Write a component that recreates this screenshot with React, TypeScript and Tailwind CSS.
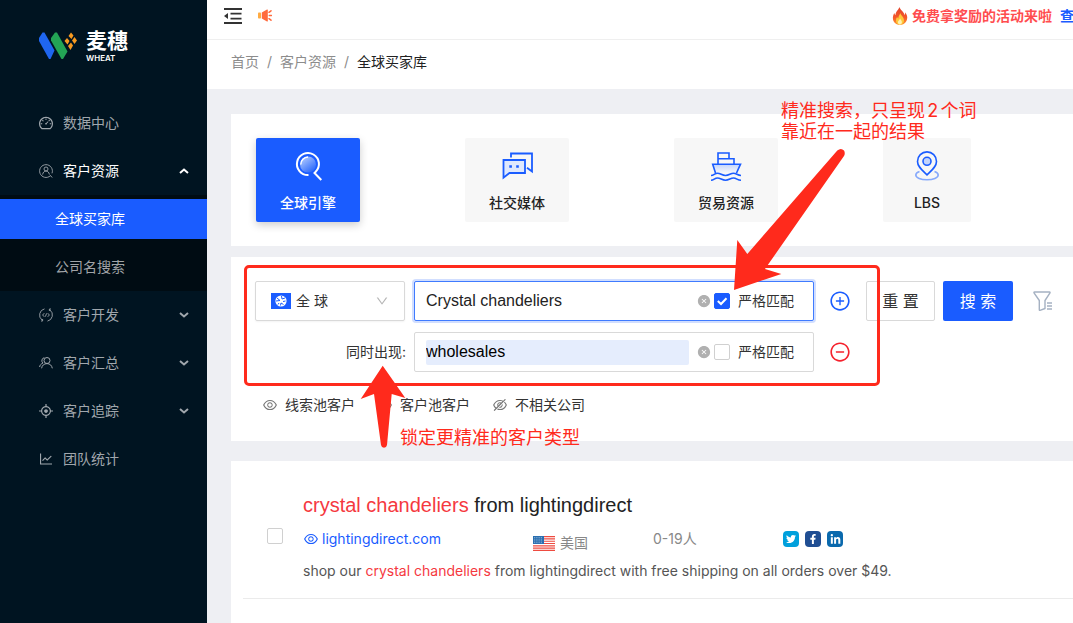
import React, { useState } from "react";
import {
  AiFillCloseCircle,
  AiOutlineAim,
  AiOutlineDashboard,
  AiOutlineDown,
  AiOutlineEye,
  AiOutlineEyeInvisible,
  AiOutlineLineChart,
  AiOutlineMinusCircle,
  AiOutlinePlusCircle,
} from "react-icons/ai";
import { FaFacebookF, FaLinkedinIn, FaTwitter } from "react-icons/fa";

function LogoMark() {
  return (
    <svg className="h-7 w-[38px]" viewBox="0 0 38 28" aria-hidden="true">
      <path d="M0 6 3.500 0.500H5.500L15.500 18.500 11.500 27H10L0 9Z" fill="#1f66f0" />
      <path d="M12 6 16 0.500H18L28.500 19.500 24 27H22.500L12 8.500Z" fill="#23a455" />
      <g fill="#f79a20">
        <path d="M32 0.500 34.500 3.500 32.500 7 29.500 4Z" />
        <path d="M28 6 30.500 9 28.500 12.500 25.500 9Z" />
        <path d="M35.500 5 38 8.500 35.500 12 33 8.500Z" />
        <path d="M32 10.500 34 13.500 31.500 18 29 14Z" />
      </g>
    </svg>
  );
}

function FoldIcon() {
  return (
    <svg className="h-4 w-[18px]" viewBox="0 0 18 16" aria-hidden="true">
      <path d="M0 0h18v2H0ZM6.500 4.800H17.500v1.700H6.500ZM6.500 9.700H17.500v1.700H6.500ZM0 14h18v2H0ZM0 8 4 5v6Z" fill="#333" />
    </svg>
  );
}

function UserSearchIcon() {
  return (
    <svg className="size-[14px]" viewBox="0 0 14 14" fill="none" stroke="currentColor" strokeWidth="0.9" aria-hidden="true">
      <path d="M11.300 11.800A6.400 6.400 0 1 1 13 9.300M11 11.300l2.400 2.200" />
      <circle cx="7" cy="5" r="2" />
      <path d="M3.600 10.500C4 8.300 5.300 7 7 7s3 1.300 3.400 3.500" />
    </svg>
  );
}

function DevelopIcon() {
  return (
    <svg className="size-[14px]" viewBox="0 0 14 14" fill="none" stroke="currentColor" strokeWidth="0.9" aria-hidden="true">
      <path d="M5.500 0.900A6.300 6.300 0 0 0 3 12M2 13h1.600v-2M8.500 13.100A6.300 6.300 0 0 0 11 2M12 1h-1.600v2" />
      <path d="M5.300 5.200 3.600 7l1.700 1.800M8.700 5.200 10.400 7 8.700 8.800M7.600 5.400 6.400 8.600" />
    </svg>
  );
}

function TeamIcon() {
  return (
    <svg className="size-[14px]" viewBox="0 0 14 14" fill="none" stroke="currentColor" strokeWidth="1" aria-hidden="true">
      <circle cx="8" cy="4.500" r="3" />
      <path d="M2.600 12.300C3 9.500 5 7.600 8 7.600s4.800 1.900 5.300 4.700M5.300 1.700A3 3 0 0 0 4 7C2 7.800.800 9.300.600 11" />
    </svg>
  );
}

function SoundIcon() {
  return (
    <svg className="h-[13px] w-[14px]" viewBox="0 0 14 13" aria-hidden="true">
      <rect x="0" y="3.500" width="3" height="6" rx="0.800" fill="#ffab42" />
      <path d="M3.800 3.500 9 0.500q.8-.3.800.500v11q0 .8-.8.500L3.800 9.500Z" fill="#ff6a3d" />
      <path d="M11 3.300 13 1.800M11.300 6.500h2.200M11 9.700l2 1.500" stroke="#ff6a3d" strokeWidth="1.500" strokeLinecap="round" />
    </svg>
  );
}

function FireIcon() {
  return (
    <svg className="h-[18px] w-[16px]" viewBox="0 0 16 18" aria-hidden="true">
      <defs>
        <linearGradient id="flame" x1="0" y1="0" x2="0" y2="1">
          <stop offset="0" stopColor="#e2432c" />
          <stop offset="0.600" stopColor="#f4592a" />
          <stop offset="1" stopColor="#ff9b2e" />
        </linearGradient>
      </defs>
      <path d="M7.500 0c.5 3 4.500 4.500 5 8 .7-.7.700-1.800.500-2.800C15 7.500 15.700 9.500 15 12.500c-.7 3-3.300 5.300-7 5.300S1.500 15.500 1 12.500C.500 9.500 1.500 7.500 2.300 6c.2 1 .5 1.700 1.200 2.200C3.600 4.500 6.500 3 7.500 0Z" fill="url(#flame)" />
      <path d="M8.300 6c.2 2.300 3.500 3.500 3.700 7.200.1 2.500-1.700 4.200-4 4.200s-4-1.600-4-4c0-1.500.6-2.600 1.300-3.300.1.900.5 1.300 1 1.500C6.300 9.500 7.500 8 8.300 6Z" fill="#ffc93a" />
      <path d="M8.200 11.500c.3 1.300 1.700 2 1.700 3.700 0 1.300-.8 2.200-2 2.200s-2-.9-2-2.200c0-1.500 1.700-2 2.300-3.700Z" fill="#fff2b0" />
    </svg>
  );
}

function EngineIcon() {
  return (
    <svg className="size-8" viewBox="0 0 32 32" fill="none" aria-hidden="true">
      <defs>
        <linearGradient id="lens" x1="0.200" y1="0.100" x2="0.800" y2="0.900">
          <stop offset="0" stopColor="#a9c4ff" />
          <stop offset="1" stopColor="#2e6bfb" />
        </linearGradient>
      </defs>
      <circle cx="16" cy="14.500" r="8" fill="url(#lens)" />
      <path d="M8.800 14.500A7.500 7.500 0 0 1 16 7" stroke="#fff" strokeWidth="1.400" />
      <path d="M16.500 25A11 11 0 1 1 23.500 22l-1 1 6.800 7" stroke="#fff" strokeWidth="2" />
    </svg>
  );
}

function ChatIcon() {
  return (
    <svg className="size-8" viewBox="0 0 32 32" fill="none" stroke="#1a5cff" strokeWidth="1.800" aria-hidden="true">
      <path d="M10 7.500v-4h21V21.500L26 17.700" />
      <path d="M2.500 10H24v13H8.500l-6 4.700Z" fill="#dfe8fd" />
      <path d="M8.300 16.500h2.600M15.200 16.500h2.600" strokeWidth="2.600" />
    </svg>
  );
}

function ShipIcon() {
  return (
    <svg className="size-8" viewBox="0 0 32 32" fill="none" stroke="#1a5cff" strokeWidth="1.600" aria-hidden="true">
      <defs>
        <linearGradient id="hull" x1="0" y1="0" x2="0" y2="1">
          <stop offset="0" stopColor="#c3d4fb" />
          <stop offset="1" stopColor="#f7f8fa" />
        </linearGradient>
      </defs>
      <path d="M5.500 23 2.700 14.200H30.500L26.500 23" fill="url(#hull)" />
      <path d="M8 14V3h11v5.700M8 8.800h16V14" />
      <path d="M1 25.500c3 0 3.500-2.300 6.500-2.300s4.500 2.300 8 2.300 5-2.300 8-2.300 4 2.300 7.500 2.300M1 30.300c3 0 3.500-2.300 6.500-2.300s4.500 2.300 8 2.300 5-2.300 8-2.300 4 2.300 7.500 2.300" />
    </svg>
  );
}

function PinIcon() {
  return (
    <svg className="size-8" viewBox="0 0 32 32" fill="none" stroke="#1a5cff" strokeWidth="1.600" aria-hidden="true">
      <path d="M8.500 21.500C6 22.300 4.800 23.500 4.800 25c0 2.800 5 4.800 11.200 4.800s11.200-2 11.200-4.800c0-1.500-1.200-2.700-3.700-3.500" stroke="#86a9fb" />
      <path d="M16 24.800C11 20 6.500 16.500 6.500 11.400a9.500 9.500 0 0 1 19 0C25.500 16.500 21 20 16 24.800Z" fill="#f7f7f7" />
      <circle cx="16" cy="11.300" r="4" fill="#c3d4fb" />
    </svg>
  );
}

function GlobeFlag() {
  return (
    <svg className="h-4 w-5" viewBox="0 0 20 16" aria-hidden="true">
      <rect width="20" height="16" fill="#1a5cff" />
      <circle cx="10" cy="8" r="5.600" fill="#fff" />
      <path d="M6 5 9 7.500 5 8M10.500 3 11 6l3-1M12 8.500l2.500-.5M9.500 12.500l.5-2.500 2.500 1.500M7 11.500 8 10" stroke="#1a5cff" strokeWidth="1" fill="none" />
    </svg>
  );
}

function UsFlag() {
  return (
    <svg className="h-[15px] w-[22px]" viewBox="0 0 22 15" aria-hidden="true">
      <rect width="22" height="15" fill="#fff" />
      <path d="M0 .6h22M0 2.900h22M0 5.200h22M0 7.500h22M0 9.800h22M0 12.100h22M0 14.400h22" stroke="#ee4b40" strokeWidth="1.150" />
      <rect width="11" height="8" fill="#2a6fb0" />
      <path d="M1 1.500h9M1 3.200h9M1 4.900h9M1 6.600h9" stroke="#b9d3ea" strokeWidth="0.700" strokeDasharray="0.800 1" />
    </svg>
  );
}

function FilterIcon() {
  return (
    <svg className="size-5" viewBox="0 0 20 20" fill="none" stroke="#a5b1c2" strokeWidth="1.400" aria-hidden="true">
      <path d="M12 9.500 17 1.800Q17.200 1 16.500 1H1.500Q.8 1 1 1.800L6.300 9.500V18.500Q6.300 19.500 7 19.300L12 17.500Z" strokeLinejoin="round" />
      <path d="M14 12h5M14 15h5M14 18h5" />
    </svg>
  );
}

function Tick({ id, label, checked, onChange }: { id: string; label?: string; checked: boolean; onChange: () => void }) {
  return (
    <span className="relative flex size-4 shrink-0">
      <input
        id={id}
        type="checkbox"
        aria-label={label}
        checked={checked}
        onChange={onChange}
        className="size-4 appearance-none rounded-xs border border-[#d0d0d0] bg-white checked:border-[#1a5cff] checked:bg-[#1a5cff]"
      />
      {checked && (
        <svg className="pointer-events-none absolute inset-0 size-4" viewBox="0 0 16 16" fill="none" stroke="#fff" strokeWidth="2" aria-hidden="true">
          <path d="M3.800 8 7 11l5.500-5.800" />
        </svg>
      )}
    </span>
  );
}

function MenuItem({ icon, label, open, arrow }: { icon: React.ReactNode; label: string; open?: boolean; arrow?: boolean }) {
  return (
    <button
      type="button"
      className={`flex h-12 w-full items-center gap-[9px] pr-[18px] pl-[38px] text-left ${open ? "text-white" : "text-[#a0a7ad]"}`}
    >
      <span className="flex w-4 justify-center text-[16px] text-[#a0a7ad]">{icon}</span>
      <span className="flex-1">{label}</span>
      {arrow && (
        <svg className={`size-[10px] ${open ? "rotate-180" : ""}`} viewBox="0 0 10 10" fill="none" stroke="currentColor" strokeWidth="2" aria-hidden="true">
          <path d="M1 3l4 3.500L9 3" />
        </svg>
      )}
    </button>
  );
}

function Sidebar() {
  return (
    <aside className="w-[207px] shrink-0 bg-[#001421] pt-[29px]">
      <div className="mb-9 flex h-[34px] items-center gap-[9px] pl-[39px] text-white">
        <LogoMark />
        <div className="flex flex-col pt-px">
          <span className="text-[21px] leading-[22px] font-bold">麦穗</span>
          <span className="text-[8px] leading-[12px] font-semibold">WHEAT</span>
        </div>
      </div>
      <nav>
        <MenuItem icon={<AiOutlineDashboard />} label="数据中心" />
        <MenuItem icon={<UserSearchIcon />} label="客户资源" open arrow />
        <div className="flex flex-col gap-2 bg-[#000c13] py-1">
          <a href="#buyers" className="flex h-10 items-center bg-[#1a5cff] pl-[55px] text-white">
            全球买家库
          </a>
          <a href="#company" className="flex h-10 items-center pl-[55px] text-[#a0a4a7]">
            公司名搜索
          </a>
        </div>
        <MenuItem icon={<DevelopIcon />} label="客户开发" arrow />
        <MenuItem icon={<TeamIcon />} label="客户汇总" arrow />
        <MenuItem icon={<AiOutlineAim />} label="客户追踪" arrow />
        <MenuItem icon={<AiOutlineLineChart />} label="团队统计" />
      </nav>
    </aside>
  );
}

function SourceTab({ icon, label, active, narrow }: { icon: React.ReactNode; label: string; active?: boolean; narrow?: boolean }) {
  return (
    <button
      type="button"
      className={`flex h-[84px] shrink-0 flex-col items-center gap-[10px] rounded-xs pt-3 font-medium ${narrow ? "w-[88px]" : "w-[104px]"} ${
        active ? "bg-[#1a5cff] text-white shadow-[0_3px_8px_rgba(0,0,0,0.2)]" : "bg-[#f7f7f7] text-[#222]"
      }`}
    >
      {icon}
      {label}
    </button>
  );
}

function KeywordBox({ id, label, initial, focused, strict }: { id: string; label: string; initial: string; focused?: boolean; strict: boolean }) {
  const [value, setValue] = useState(initial);
  const [checked, setChecked] = useState(strict);
  return (
    <div
      className={`flex h-10 w-[400px] shrink-0 items-center rounded-xs border bg-white pr-[19px] pl-[11px] ${
        focused ? "border-[#3f7bff] shadow-[0_0_0_2px_rgba(26,92,255,0.2)]" : "border-[#d9d9d9]"
      }`}
    >
      <input
        type="text"
        aria-label={label}
        value={value}
        onChange={(e) => setValue(e.target.value)}
        className={`mr-2 h-[25px] min-w-0 flex-1 rounded-xs font-['Liberation_Sans','Noto_Sans_CJK_SC',sans-serif] text-[16px] outline-none ${
          focused ? "text-[#222]" : "bg-[#e5edfd] text-black"
        }`}
      />
      <button type="button" aria-label="清除" onClick={() => setValue("")} className="mr-[3px] text-[#b0b0b0]">
        <AiFillCloseCircle className="size-[14px]" />
      </button>
      <Tick id={id + "-strict"} checked={checked} onChange={() => setChecked(!checked)} />
      <label htmlFor={id + "-strict"} className="pl-2 text-[#333]">
        严格匹配
      </label>
    </div>
  );
}

function SearchPanel() {
  return (
    <section className="mt-[11px] h-[184px] overflow-hidden bg-white pt-6 pl-6">
      <div className="flex items-center">
        <button type="button" className="flex h-10 w-[150px] shrink-0 items-center rounded-xs border border-[#d9d9d9] px-[15px] text-[#333] shadow-xs">
          <GlobeFlag />
          <span className="flex-1 pl-[5px] text-left">全 球</span>
          <AiOutlineDown className="size-[14px] text-[#b5b5b5]" />
        </button>
        <div className="ml-[9px] flex">
          <KeywordBox id="keyword" label="关键词" initial="Crystal chandeliers" focused strict />
        </div>
        <button type="button" aria-label="添加" className="mx-[15px] text-[#1a5cff]">
          <AiOutlinePlusCircle className="size-[22px]" />
        </button>
        <button type="button" className="h-10 w-[69px] shrink-0 rounded-xs border border-[#d9d9d9] text-[16px] text-[#333]">
          重 置
        </button>
        <button type="button" className="ml-2 h-10 w-[70px] shrink-0 rounded-xs bg-[#1a5cff] text-[16px] text-white">
          搜 索
        </button>
        <button type="button" aria-label="筛选" className="ml-5 shrink-0">
          <FilterIcon />
        </button>
      </div>
      <div className="mt-[11px] flex items-center">
        <span className="w-[151px] shrink-0 text-right text-[#333]">同时出现:</span>
        <div className="ml-2 flex">
          <KeywordBox id="together" label="同时出现" initial="wholesales" strict={false} />
        </div>
        <button type="button" aria-label="移除" className="mx-[15px] text-[#f5222d]">
          <AiOutlineMinusCircle className="size-[22px]" />
        </button>
      </div>
      <div className="mt-[22px] flex gap-[22px] pl-[7px] text-[#333]">
        <button type="button" className="flex items-center gap-[7px]">
          <AiOutlineEye className="size-4 text-[#777]" />
          线索池客户
        </button>
        <button type="button" className="flex items-center gap-[7px]">
          <AiOutlineEye className="size-4 text-[#777]" />
          客户池客户
        </button>
        <button type="button" className="flex items-center gap-[7px]">
          <AiOutlineEyeInvisible className="size-4 text-[#777]" />
          不相关公司
        </button>
      </div>
    </section>
  );
}

function ResultPanel() {
  const [picked, setPicked] = useState(false);
  return (
    <section className="mt-5 flex-1 bg-white pl-3">
      <article className="flex items-center gap-5 border-b border-[#ebebeb] pt-7 pb-4 pl-6">
        <Tick id="result" label="选择" checked={picked} onChange={() => setPicked(!picked)} />
        <div className="flex flex-col">
          <h2 className="font-['Liberation_Sans','Noto_Sans_CJK_SC',sans-serif] text-[20px] leading-8 text-[#222]">
            <span className="text-[#f5393f]">crystal chandeliers</span> from lightingdirect
          </h2>
          <div className="mt-[7px] flex h-[22px] items-center text-[#888]">
            <a href="#site" className="flex w-[230px] items-center gap-[3px] text-[#1a5cff]">
              <AiOutlineEye className="size-4" />
              lightingdirect.com
            </a>
            <span className="flex w-[120px] items-center gap-[5px] pt-2">
              <UsFlag />
              美国
            </span>
            <span className="w-[130px]">0-19人</span>
            <span className="flex gap-[6px] text-white">
              <a href="#twitter" aria-label="Twitter" className="flex size-4 items-center justify-center rounded-[4px] bg-[#00a0dc]">
                <FaTwitter className="size-[10px]" />
              </a>
              <a href="#facebook" aria-label="Facebook" className="flex size-4 items-center justify-center rounded-[4px] bg-[#204e93]">
                <FaFacebookF className="size-[10px]" />
              </a>
              <a href="#linkedin" aria-label="LinkedIn" className="flex size-4 items-center justify-center rounded-[4px] bg-[#0a69ad]">
                <FaLinkedinIn className="size-[11px]" />
              </a>
            </span>
          </div>
          <p className="mt-[10px] text-[#555]">
            shop our <span className="text-[#f5393f]">crystal chandeliers</span> from lightingdirect with free shipping on all orders over $49.
          </p>
        </div>
      </article>
    </section>
  );
}

function Annotations() {
  return (
    <div className="pointer-events-none absolute inset-0 text-[18px] leading-[21px] text-[#ff2a1c]">
      <div className="absolute top-[265px] left-[37px] h-[121px] w-[636px] rounded-[5px] border-3 border-[#ff2a1c]" />
      <svg className="absolute top-[140px] left-[517px] h-[160px] w-[130px]" viewBox="724 140 130 160" fill="#ff2a1c" aria-hidden="true">
        <path d="M734 290 737.300 240 747.300 254 837.300 150.500Q841 147.500 844 150.500 845.500 153 844 156L765 269 781.300 274Z" />
      </svg>
      <svg className="absolute top-[360px] left-[148px] h-[90px] w-[56px]" viewBox="355 360 56 90" fill="#ff2a1c" aria-hidden="true">
        <path d="M382.700 365.700 405.300 398 391.700 394 387 445Q386.500 447.700 384 447.700T381 445L374 394 360.700 399Z" />
      </svg>
      <p className="absolute top-[100px] left-[574px] whitespace-nowrap [text-autospace:normal]">
        精准搜索，只呈现2个词
        <br />
        靠近在一起的结果
      </p>
      <p className="absolute top-[427px] left-[193px] whitespace-nowrap">锁定更精准的客户类型</p>
    </div>
  );
}

export default function App() {
  return (
    <div className="flex min-h-screen overflow-hidden bg-[#eeeff3] font-['Inter','Noto_Sans_CJK_SC',sans-serif] text-[14px] leading-[22px]">
      <Sidebar />
      <div className="relative flex min-w-0 flex-1 flex-col">
        <header className="flex h-10 items-center border-b border-[#efefef] bg-white pb-2 pl-[17px] shadow-xs">
          <button type="button" aria-label="收起菜单">
            <FoldIcon />
          </button>
          <span className="ml-4">
            <SoundIcon />
          </span>
          <div className="ml-auto flex items-center font-bold">
            <FireIcon />
            <span className="pl-1 text-[#ff4d4f]">免费拿奖励的活动来啦</span>
            <a href="#activity" className="ml-2 w-[13px] whitespace-nowrap text-[#1a5cff]">
              查
            </a>
          </div>
        </header>
        <nav className="flex h-[49px] items-center gap-2 bg-white pb-[5px] pl-6 text-[#8c8c8c]">
          <a href="#home">首页</a>
          <span>/</span>
          <a href="#customers">客户资源</a>
          <span>/</span>
          <span className="text-[#222]">全球买家库</span>
        </nav>
        <main className="flex flex-1 flex-col pt-[25px] pl-6">
          <section className="flex gap-[105px] overflow-hidden bg-white py-6 pl-[25px]">
            <SourceTab icon={<EngineIcon />} label="全球引擎" active />
            <SourceTab icon={<ChatIcon />} label="社交媒体" />
            <SourceTab icon={<ShipIcon />} label="贸易资源" />
            <SourceTab icon={<PinIcon />} label="LBS" narrow />
          </section>
          <SearchPanel />
          <ResultPanel />
        </main>
        <Annotations />
      </div>
    </div>
  );
}
